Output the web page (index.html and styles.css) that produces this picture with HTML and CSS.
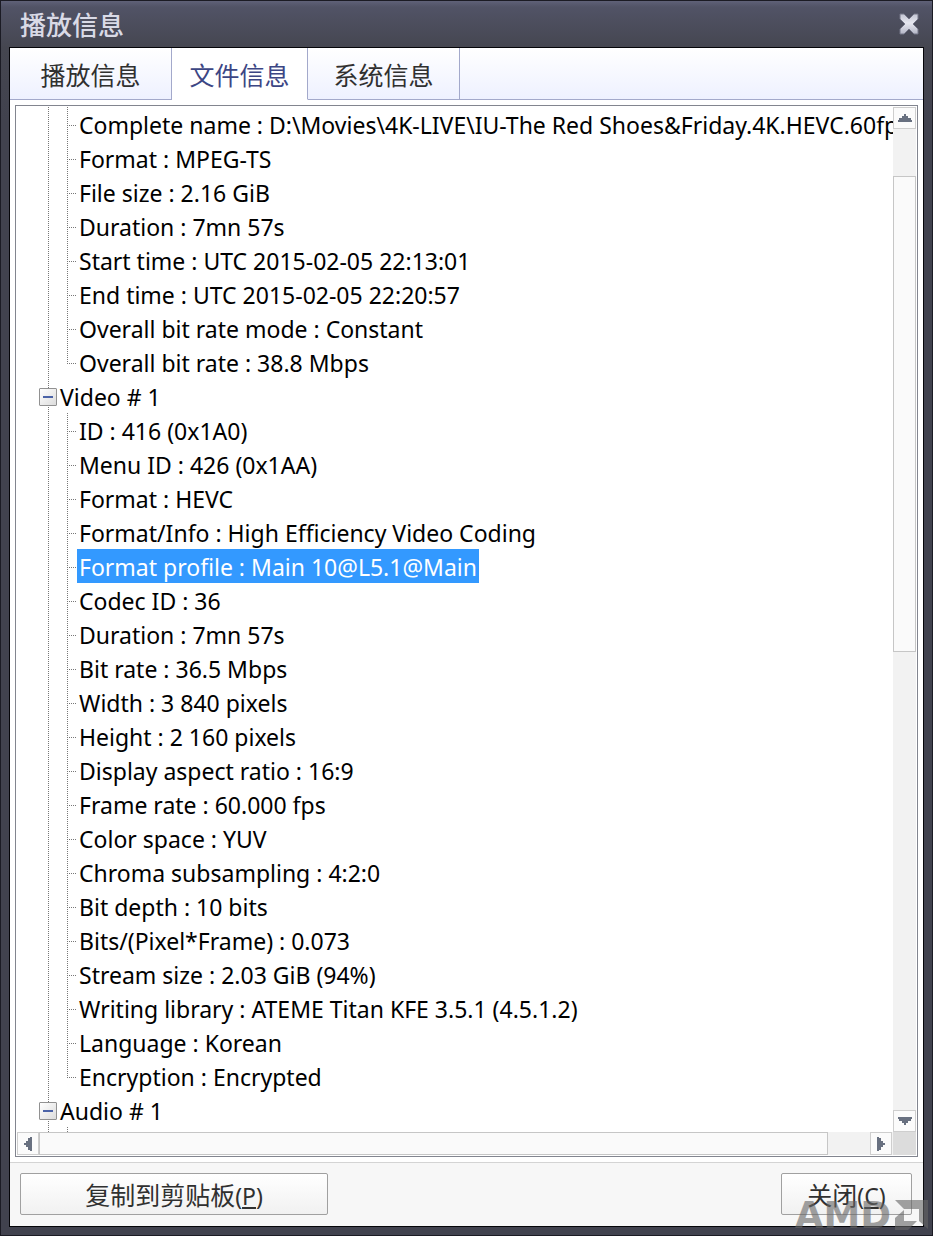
FILE: index.html
```html
<!DOCTYPE html>
<html lang="zh-CN">

<head>
    <meta charset="UTF-8">
    <meta name="viewport" content="width=device-width, initial-scale=1.0">
    <title>播放信息</title>
    <link rel="stylesheet" href="styles.css">
</head>

<body>
    <div class="window">
        <header class="titlebar">
            <h1>播放信息</h1>
            <button class="close" type="button" aria-label="关闭">
                <svg width="20" height="22" viewBox="0 0 20 22">
                    <defs>
                        <linearGradient id="steel" x1="0" y1="0" x2="0" y2="1">
                            <stop offset="0" stop-color="#c2c4d2"/>
                            <stop offset=".45" stop-color="#e6e7f0"/>
                            <stop offset="1" stop-color="#b4b6c6"/>
                        </linearGradient>
                    </defs>
                    <path fill="url(#steel)" stroke="#747688" d="M1 1h4l1 1 4 4 4-4 1-1h4v5l-1 1-4 4 4 4 1 1v5h-4l-1-1-4-4-4 4-1 1H1v-5l1-1 4-4-4-4-1-1z"/>
                </svg>
            </button>
        </header>
        <main class="content">
            <nav class="tabs">
                <button class="tab tab-play" type="button">播放信息</button>
                <button class="tab tab-file active" type="button">文件信息</button>
                <button class="tab tab-system" type="button">系统信息</button>
            </nav>
            <div class="tree-box">
                <div class="tree-view">
                    <ul class="tree">
                        <li class="group">
                            <ul>
                                <li><span>Complete name : D:\Movies\4K-LIVE\IU-The Red Shoes&amp;Friday.4K.HEVC.60fps</span></li>
                                <li><span>Format : MPEG-TS</span></li>
                                <li><span>File size : 2.16 GiB</span></li>
                                <li><span>Duration : 7mn 57s</span></li>
                                <li><span>Start time : UTC 2015-02-05 22:13:01</span></li>
                                <li><span>End time : UTC 2015-02-05 22:20:57</span></li>
                                <li><span>Overall bit rate mode : Constant</span></li>
                                <li><span>Overall bit rate : 38.8 Mbps</span></li>
                            </ul>
                        </li>
                        <li class="group">
                            <div class="node"><button class="toggle" type="button" aria-label="Video"></button><span>Video # 1</span></div>
                            <ul>
                                <li><span>ID : 416 (0x1A0)</span></li>
                                <li><span>Menu ID : 426 (0x1AA)</span></li>
                                <li><span>Format : HEVC</span></li>
                                <li><span>Format/Info : High Efficiency Video Coding</span></li>
                                <li><span class="selected">Format profile : Main 10@L5.1@Main</span></li>
                                <li><span>Codec ID : 36</span></li>
                                <li><span>Duration : 7mn 57s</span></li>
                                <li><span>Bit rate : 36.5 Mbps</span></li>
                                <li><span>Width : 3 840 pixels</span></li>
                                <li><span>Height : 2 160 pixels</span></li>
                                <li><span>Display aspect ratio : 16:9</span></li>
                                <li><span>Frame rate : 60.000 fps</span></li>
                                <li><span>Color space : YUV</span></li>
                                <li><span>Chroma subsampling : 4:2:0</span></li>
                                <li><span>Bit depth : 10 bits</span></li>
                                <li><span>Bits/(Pixel*Frame) : 0.073</span></li>
                                <li><span>Stream size : 2.03 GiB (94%)</span></li>
                                <li><span>Writing library : ATEME Titan KFE 3.5.1 (4.5.1.2)</span></li>
                                <li><span>Language : Korean</span></li>
                                <li><span>Encryption : Encrypted</span></li>
                            </ul>
                        </li>
                        <li class="group">
                            <div class="node"><button class="toggle" type="button" aria-label="Audio"></button><span>Audio # 1</span></div>
                            <ul>
                                <li></li>
                            </ul>
                        </li>
                    </ul>
                </div>
                <div class="scroll scroll-y">
                    <button class="arrow" type="button" aria-label="Up">
                        <svg width="14" height="8" viewBox="0 0 14 8"><path d="M6 0h2v2h2v2h3v2h1v2H0V6h1V4h3V2h2z"/></svg>
                    </button>
                    <div class="track"><div class="thumb"></div></div>
                    <button class="arrow" type="button" aria-label="Down">
                        <svg width="14" height="8" viewBox="0 0 14 8"><path d="M0 0h14v2h-1v2h-3v2H8v2H6V6H4V4H1V2H0z"/></svg>
                    </button>
                </div>
                <div class="scroll scroll-x">
                    <button class="arrow" type="button" aria-label="Left">
                        <svg width="8" height="14" viewBox="0 0 8 14"><path d="M0 6v2h2v2h2v3h2v1h2V0H6v1H4v3H2v2z"/></svg>
                    </button>
                    <div class="track"><div class="thumb"></div></div>
                    <button class="arrow" type="button" aria-label="Right">
                        <svg width="8" height="14" viewBox="0 0 8 14"><path d="M0 0h2v1h2v3h2v2h2v2H6v2H4v3H2v1H0z"/></svg>
                    </button>
                </div>
                <div class="corner"></div>
            </div>
            <footer class="actions">
                <button class="btn btn-copy" type="button">复制到剪贴板<span class="key">(<u>P</u>)</span></button>
                <button class="btn btn-close" type="button">关闭<span class="key">(<u>C</u>)</span></button>
            </footer>
        </main>
        <div class="watermark">
            <span>AMD</span>
            <svg width="33" height="31" viewBox="0 0 33 31">
                <path d="M0 0h33v29l-9-8V9H9z"/>
                <path d="M9 10v11h13l-9 9H0V18z"/>
            </svg>
        </div>
    </div>
</body>

</html>
```

FILE: styles.css
```css
* {
    box-sizing: border-box;
}

body {
    margin: 0;
    background-color: #41424e;
    font-family: "Noto Sans", "Noto Sans CJK SC", sans-serif;
    color: #000;
}

button {
    margin: 0;
    padding: 0;
    border: none;
    background: none;
    font-family: "Noto Sans CJK SC", sans-serif;
    font-size: 25px;
    color: #303030;
    cursor: pointer;
}

ul {
    margin: 0;
    padding: 0;
    list-style: none;
}

svg {
    display: block;
}

/* window frame */
.window {
    position: relative;
    display: flex;
    flex-direction: column;
    height: 100vh;
    padding: 0 8px 8px;
    border: 1px solid #1b1b24;
    background: linear-gradient(#5f6178, #515366 6px, #454650 47px, #41424e 120px);
}

.titlebar {
    display: flex;
    align-items: center;
    justify-content: space-between;
    height: 46px;
    padding: 0 5px 0 11px;
}

.titlebar h1 {
    margin: 0;
    font-family: "Noto Sans CJK SC", sans-serif;
    font-size: 26px;
    font-weight: 500;
    line-height: 46px;
    color: #d9dae6;
}

.content {
    display: flex;
    flex: 1;
    flex-direction: column;
    min-height: 0;
    border: 1px solid #050509;
    background-color: #fff;
}

/* tabs */
.tabs {
    display: flex;
    height: 52px;
    border-bottom: 1px solid #a3a9cb;
    background: linear-gradient(#fff, #eef1ff);
}

.tab {
    height: 52px;
    border-right: 1px solid #a3a9cb;
    border-bottom: 1px solid #a3a9cb;
}

.tab-play {
    width: 162px;
}

.tab-file {
    width: 136px;
}

.tab-system {
    width: 152px;
}

.tab.active {
    border-bottom-color: #fff;
    background-color: #fff;
    color: #3c4684;
}

/* tree */
.tree-box {
    display: grid;
    flex: 1;
    grid-template-columns: 1fr 23px;
    grid-template-rows: 1fr 23px;
    min-height: 0;
    margin: 5px;
    padding: 1px;
    border: 1px solid #82858f;
}

.tree-view {
    min-width: 0;
    min-height: 0;
    overflow: hidden;
}

.tree {
    padding-left: 31px;
    font-size: 23px;
    line-height: 36px;
    white-space: nowrap;
}

.group {
    background: repeating-linear-gradient(#777 0 1px, transparent 1px 2px) 0 0 / 1px 100% no-repeat;
}

.node {
    display: flex;
    gap: 3px;
    height: 34px;
    margin-left: -9px;
}

.toggle {
    display: flex;
    align-items: center;
    justify-content: center;
    width: 18px;
    height: 18px;
    margin-top: 9px;
    border: 1px solid #919191;
    border-radius: 1px;
    background: linear-gradient(135deg, #fff, #dcdcdc);
}

.toggle::before {
    content: "";
    width: 10px;
    height: 2px;
    background-color: #4b63a7;
}

.group li {
    display: flex;
    height: 34px;
    margin-left: 19px;
    background:
        repeating-linear-gradient(#777 0 1px, transparent 1px 2px) 0 0 / 1px 100% no-repeat,
        repeating-linear-gradient(90deg, #777 0 1px, transparent 1px 2px) 0 18px / 10px 1px no-repeat;
}

.group li:last-child {
    background-size: 1px 18px, 10px 1px;
}

.group li span {
    height: 34px;
    margin-left: 10px;
    padding: 0 2px;
}

.group li .selected {
    background-color: #3399ff;
    color: #fff;
}

/* scrollbars */
.scroll {
    display: flex;
    background-color: #f2f2f2;
}

.scroll-y {
    flex-direction: column;
}

.arrow {
    display: flex;
    flex: 0 0 22px;
    align-items: center;
    justify-content: center;
    border: 1px solid #cecece;
    background-color: #fbfbfb;
}

.arrow path {
    fill: #687080;
}

.track {
    flex: 1;
}

.thumb {
    border: 1px solid #c6c6c6;
    background-color: #fafafa;
}

.scroll-y .track {
    padding-top: 47px;
}

.scroll-y .thumb {
    height: 51%;
}

.scroll-x .thumb {
    width: 95%;
    height: 100%;
}

.scroll-x .arrow:last-child {
    margin-right: 1px;
}

.corner {
    background-color: #dcdcdc;
}

/* bottom buttons */
.actions {
    display: flex;
    justify-content: space-between;
    padding: 10px 11px 11px 10px;
    border-top: 1px solid #d4d4d4;
    background-color: #f7f7f7;
}

.btn {
    height: 42px;
    border: 1px solid #a0a0a0;
    border-radius: 2px;
    background: linear-gradient(#fff, #f1f1f1);
}

.btn-copy {
    width: 308px;
}

.btn-close {
    width: 131px;
}

.key {
    font-family: "Noto Sans", sans-serif;
    font-size: 23px;
}

/* logo over the lower right corner */
.watermark {
    position: absolute;
    right: 4px;
    bottom: 4px;
    display: flex;
    align-items: center;
    gap: 4px;
    opacity: 0.6;
    font-family: "DejaVu Sans", sans-serif;
    font-size: 37px;
    font-weight: bold;
    line-height: 31px;
    color: #666;
    pointer-events: none;
}

.watermark path {
    fill: #666;
}
```
